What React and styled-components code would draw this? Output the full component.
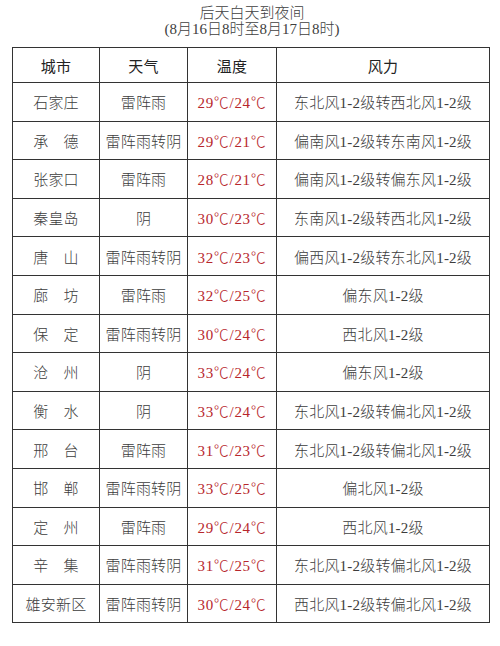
import React from "react";
import styled, { createGlobalStyle } from "styled-components";

const ROWS = [
  ["石家庄", "雷阵雨", "29℃/24℃", "东北风1-2级转西北风1-2级"],
  ["承　德", "雷阵雨转阴", "29℃/21℃", "偏南风1-2级转东南风1-2级"],
  ["张家口", "雷阵雨", "28℃/21℃", "偏南风1-2级转偏东风1-2级"],
  ["秦皇岛", "阴", "30℃/23℃", "东南风1-2级转西北风1-2级"],
  ["唐　山", "雷阵雨转阴", "32℃/23℃", "偏西风1-2级转东北风1-2级"],
  ["廊　坊", "雷阵雨", "32℃/25℃", "偏东风1-2级"],
  ["保　定", "雷阵雨转阴", "30℃/24℃", "西北风1-2级"],
  ["沧　州", "阴", "33℃/24℃", "偏东风1-2级"],
  ["衡　水", "阴", "33℃/24℃", "东北风1-2级转偏北风1-2级"],
  ["邢　台", "雷阵雨", "31℃/23℃", "东北风1-2级转偏北风1-2级"],
  ["邯　郸", "雷阵雨转阴", "33℃/25℃", "偏北风1-2级"],
  ["定　州", "雷阵雨", "29℃/24℃", "西北风1-2级"],
  ["辛　集", "雷阵雨转阴", "31℃/25℃", "东北风1-2级转偏北风1-2级"],
  ["雄安新区", "雷阵雨转阴", "30℃/24℃", "西北风1-2级转偏北风1-2级"],
];

const GlobalStyle = createGlobalStyle`
  html, body {
    margin: 0;
    padding: 0;
    background: #fff;
  }
  body {
    width: 500px;
    height: 646px;
    font-family: "Liberation Serif", "Noto Sans CJK SC", serif;
    font-weight: 300;
    color: #3c3c3c;
  }
`;

const Page = styled.div`
  padding: 5px 10px 0 12px;
`;

const Heading = styled.div`
  text-align: center;
  font-size: 15px;
  line-height: 16px;
  color: #404040;
  margin-bottom: 10px;
  padding-left: 2px;
`;

const Grid = styled.div`
  display: grid;
  width: 478px;
  grid-template-columns: 87px 88px 89px 1fr;
  grid-template-rows: 35px repeat(14, 38.6px);
  border-top: 1px solid #333;
  border-left: 1px solid #333;
  box-sizing: border-box;
`;

const Cell = styled.div`
  display: flex;
  align-items: center;
  justify-content: center;
  border-right: 1px solid #333;
  border-bottom: 1px solid #333;
  font-size: 15px;
  white-space: nowrap;
  color: ${(p) => (p.$red ? "#b7262c" : p.$head ? "#222" : "#3c3c3c")};
  font-weight: ${(p) => (p.$head ? 400 : 300)};
  letter-spacing: ${(p) => (p.$red ? "0.7px" : "0.2px")};
`;

export default function App() {
  return (
    <Page>
      <GlobalStyle />
      <Heading>
        后天白天到夜间
        <br />
        (8月16日8时至8月17日8时)
      </Heading>
      <Grid>
        {["城市", "天气", "温度", "风力"].map((h) => (
          <Cell key={h} $head>
            {h}
          </Cell>
        ))}
        {ROWS.map((r) => (
          <React.Fragment key={r[0]}>
            <Cell>{r[0]}</Cell>
            <Cell>{r[1]}</Cell>
            <Cell $red>{r[2]}</Cell>
            <Cell>{r[3]}</Cell>
          </React.Fragment>
        ))}
      </Grid>
    </Page>
  );
}
